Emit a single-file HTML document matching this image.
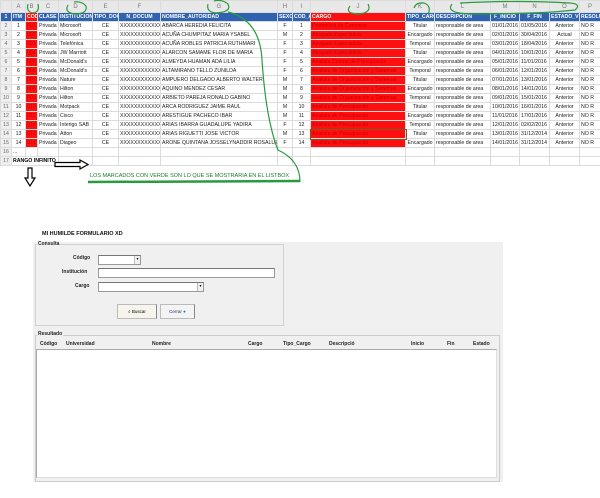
<!DOCTYPE html>
<html><head><meta charset="utf-8"><style>
body{margin:0;width:600px;height:498px;background:#fff;position:relative;overflow:hidden;font-family:"Liberation Sans",sans-serif}
table{position:absolute;left:0;top:0;width:600px;border-collapse:collapse;table-layout:fixed;font-size:5.2px;color:#222}
td{height:8px;padding:0 1px;border:1px solid #dcdcdc;white-space:nowrap;overflow:hidden;line-height:8px}
tr.h td{height:11px;background:#e8e8e8;color:#777;text-align:center;font-size:6px}
tr.b td{background:#2f62b0;color:#fff;font-weight:bold}
td.n{background:#efefef;color:#666;text-align:center}
td.r{background:#ff1010;color:#c00}
.c{text-align:center}
.ab{position:absolute}
.lbl{font-size:5px;font-weight:bold;color:#222}
.inp{position:absolute;background:#fff;border:1px solid #999;border-top-color:#777}
.dd{position:absolute;right:0;top:0;width:5px;height:100%;border-left:1px solid #bbb;background:#f0f0f0;font-size:4px;text-align:center}
</style></head><body>
<table>
<colgroup><col style="width:11px"><col style="width:14px"><col style="width:12px"><col style="width:21px"><col style="width:34px"><col style="width:26px"><col style="width:42px"><col style="width:117px"><col style="width:15px"><col style="width:18px"><col style="width:95px"><col style="width:29px"><col style="width:56px"><col style="width:29px"><col style="width:30px"><col style="width:30px"><col style="width:21px"></colgroup>
<tr class="h"><td></td><td>A</td><td>B</td><td>C</td><td>D</td><td>E</td><td>F</td><td>G</td><td>H</td><td>I</td><td>J</td><td>K</td><td>L</td><td>M</td><td>N</td><td>O</td><td>P</td></tr>
<tr class="b"><td class="n">1</td><td>ITM</td><td style="background:#ff1010">COD</td><td>CLASE</td><td>INSTITUCION</td><td>TIPO_DOC</td><td class="c">N_DOCUM</td><td>NOMBRE_AUTORIDAD</td><td>SEXO</td><td>COD_AUT</td><td style="background:#ff1010">CARGO</td><td>TIPO_CARGO</td><td>DESCRIPCION</td><td class="c">F_INICIO</td><td class="c">F_FIN</td><td>ESTADO_VIG</td><td>RESOLUC</td></tr>
<tr><td class="n">2</td><td class="c">1</td><td class="r">001</td><td>Privada</td><td>Microsoft</td><td class="c">CE</td><td>XXXXXXXXXXXXX</td><td>ABARCA HEREDIA FELICITA</td><td class="c">F</td><td class="c">1</td><td class="r">Promotora de Comercio</td><td class="c">Titular</td><td>responsable de area</td><td>01/01/2016</td><td>01/05/2016</td><td class="c">Anterior</td><td>NO R</td></tr>
<tr><td class="n">3</td><td class="c">2</td><td class="r">002</td><td>Privada</td><td>Microsoft</td><td class="c">CE</td><td>XXXXXXXXXXXXX</td><td>ACUÑA CHUMPITAZ MARIA YSABEL</td><td class="c">M</td><td class="c">2</td><td class="r">Abogado Especialista</td><td class="c">Encargado</td><td>responsable de area</td><td>02/01/2016</td><td>30/04/2016</td><td class="c">Actual</td><td>NO R</td></tr>
<tr><td class="n">4</td><td class="c">3</td><td class="r">003</td><td>Privada</td><td>Telefónica</td><td class="c">CE</td><td>XXXXXXXXXXXXX</td><td>ACUÑA ROBLES PATRICIA RUTHMARI</td><td class="c">F</td><td class="c">3</td><td class="r">Abogado Especialista</td><td class="c">Temporal</td><td>responsable de area</td><td>03/01/2016</td><td>18/04/2016</td><td class="c">Anterior</td><td>NO R</td></tr>
<tr><td class="n">5</td><td class="c">4</td><td class="r">004</td><td>Privada</td><td>JW Marriott</td><td class="c">CE</td><td>XXXXXXXXXXXXX</td><td>ALARCON SAMAME FLOR DE MARIA</td><td class="c">F</td><td class="c">4</td><td class="r">Abogado Especialista</td><td class="c">Titular</td><td>responsable de area</td><td>04/01/2016</td><td>10/01/2016</td><td class="c">Anterior</td><td>NO R</td></tr>
<tr><td class="n">6</td><td class="c">5</td><td class="r">005</td><td>Privada</td><td>McDonald's</td><td class="c">CE</td><td>XXXXXXXXXXXXX</td><td>ALMEYDA HUAMAN ADA LILIA</td><td class="c">F</td><td class="c">5</td><td class="r">Analista Central de Presupuesto</td><td class="c">Encargado</td><td>responsable de area</td><td>05/01/2016</td><td>11/01/2016</td><td class="c">Anterior</td><td>NO R</td></tr>
<tr><td class="n">7</td><td class="c">6</td><td class="r">006</td><td>Privada</td><td>McDonald's</td><td class="c">CE</td><td>XXXXXXXXXXXXX</td><td>ALTAMIRANO TELLO ZUNILDA</td><td class="c">F</td><td class="c">6</td><td class="r">Analista de Organización y Sistemas</td><td class="c">Temporal</td><td>responsable de area</td><td>06/01/2016</td><td>12/01/2016</td><td class="c">Anterior</td><td>NO R</td></tr>
<tr><td class="n">8</td><td class="c">7</td><td class="r">007</td><td>Privada</td><td>Nature</td><td class="c">CE</td><td>XXXXXXXXXXXXX</td><td>AMPUERO DELGADO ALBERTO WALTER</td><td class="c">M</td><td class="c">7</td><td class="r">Analista de Organización y Sistemas</td><td class="c">Titular</td><td>responsable de area</td><td>07/01/2016</td><td>13/01/2016</td><td class="c">Anterior</td><td>NO R</td></tr>
<tr><td class="n">9</td><td class="c">8</td><td class="r">008</td><td>Privada</td><td>Hilton</td><td class="c">CE</td><td>XXXXXXXXXXXXX</td><td>AQUINO MENDEZ CESAR</td><td class="c">M</td><td class="c">8</td><td class="r">Analista de Organización y Sistemas</td><td class="c">Encargado</td><td>responsable de area</td><td>08/01/2016</td><td>14/01/2016</td><td class="c">Anterior</td><td>NO R</td></tr>
<tr><td class="n">10</td><td class="c">9</td><td class="r">009</td><td>Privada</td><td>Hilton</td><td class="c">CE</td><td>XXXXXXXXXXXXX</td><td>ARBIETO PAREJA RONALD GABINO</td><td class="c">M</td><td class="c">9</td><td class="r">Analista de Organización y Sistemas</td><td class="c">Temporal</td><td>responsable de area</td><td>09/01/2016</td><td>15/01/2016</td><td class="c">Anterior</td><td>NO R</td></tr>
<tr><td class="n">11</td><td class="c">10</td><td class="r">010</td><td>Privada</td><td>Motpack</td><td class="c">CE</td><td>XXXXXXXXXXXXX</td><td>ARCA RODRIGUEZ JAIME RAUL</td><td class="c">M</td><td class="c">10</td><td class="r">Analista de Presupuesto</td><td class="c">Titular</td><td>responsable de area</td><td>10/01/2016</td><td>16/01/2016</td><td class="c">Anterior</td><td>NO R</td></tr>
<tr><td class="n">12</td><td class="c">11</td><td class="r">011</td><td>Privada</td><td>Cisco</td><td class="c">CE</td><td>XXXXXXXXXXXXX</td><td>ARESTIGUE PACHECO IBAR</td><td class="c">M</td><td class="c">11</td><td class="r">Analista de Presupuesto</td><td class="c">Encargado</td><td>responsable de area</td><td>11/01/2016</td><td>17/01/2016</td><td class="c">Anterior</td><td>NO R</td></tr>
<tr><td class="n">13</td><td class="c">12</td><td class="r">012</td><td>Privada</td><td>Interigo SAB</td><td class="c">CE</td><td>XXXXXXXXXXXXX</td><td>ARIAS IBARRA GUADALUPE YADIRA</td><td class="c">F</td><td class="c">12</td><td class="r">Analista de Presupuesto</td><td class="c">Temporal</td><td>responsable de area</td><td>12/01/2016</td><td>02/02/2016</td><td class="c">Anterior</td><td>NO R</td></tr>
<tr><td class="n">14</td><td class="c">13</td><td class="r">013</td><td>Privada</td><td>Atton</td><td class="c">CE</td><td>XXXXXXXXXXXXX</td><td>ARIAS RIGUETTI JOSE VICTOR</td><td class="c">M</td><td class="c">13</td><td class="r" style="outline:1px solid #7a5a20">Analista de Presupuesto</td><td class="c">Titular</td><td>responsable de area</td><td>13/01/2016</td><td>31/12/2014</td><td class="c">Anterior</td><td>NO R</td></tr>
<tr><td class="n">15</td><td class="c">14</td><td class="r">014</td><td>Privada</td><td>Diageo</td><td class="c">CE</td><td>XXXXXXXXXXXXX</td><td>ARONE QUINTANA JOSSELYNADDIR ROSALUZ</td><td class="c">F</td><td class="c">14</td><td class="r">Analista de Presupuesto</td><td class="c">Encargado</td><td>responsable de area</td><td>14/01/2016</td><td>31/12/2014</td><td class="c">Anterior</td><td>NO R</td></tr>
<tr><td class="n">16</td><td>...</td><td></td><td></td><td></td><td></td><td></td><td></td><td></td><td></td><td></td><td></td><td></td><td></td><td></td><td></td><td></td></tr>
<tr><td class="n">17</td><td colspan="3" style="font-weight:bold;color:#000">RANGO INFINITO</td><td></td><td></td><td></td><td></td><td></td><td></td><td></td><td></td><td></td><td></td><td></td><td></td><td></td></tr>
</table>

<div class="ab" style="left:90px;top:173px;font-size:5.5px;color:#1a7a30">LOS MARCADOS CON VERDE SON LO QUE SE MOSTRARIA EN EL LISTBOX</div>
<svg class="ab" style="left:0;top:0" width="600" height="200" viewBox="0 0 600 200">
<g fill="none" stroke="#2a9a40" stroke-width="1.2">
<path d="M28 4 Q26 12 33 13 Q40 12 38 4"/>
<path d="M68 5 Q64 12 74 14 Q88 14 86 6 Q82 1 74 2"/>
<path d="M208 4 Q206 12 216 13 Q232 12 228 4 Q222 -1 214 1"/>
<path d="M228 12 Q260 20 262 60 Q266 120 278 150 Q300 160 300 182"/>
<path d="M350 6 Q344 14 360 14 Q372 12 368 4"/>
<path d="M414 8 Q416 2 424 3 Q432 6 428 14"/>
<path d="M452 4 Q445 13 470 14 Q540 14 575 10 Q582 4 570 3 Q520 0 460 3"/>
</g>
<path d="M88 182 L300 181" stroke="#2a9a40" stroke-width="2.5"/>
<g fill="#fff" stroke="#000" stroke-width="1.2">
<path d="M55 162.5 H80 V160 L88 164.5 L80 169 V166.5 H55 Z"/>
<path d="M28 168 V178 H25 L30 186 L35 178 H32 V168 Z"/>
</g>
</svg>

<div class="ab" style="left:42px;top:231px;font-size:5.5px;font-weight:bold;color:#111">MI HUMILDE FORMULARIO XD</div>
<div class="ab" style="left:33px;top:242px;width:470px;height:240px;background:#f0f0f0"></div>
<div class="ab" style="left:35px;top:244px;width:247px;height:80px;border:1px solid #d0d0d0"></div>
<div class="ab lbl" style="left:37px;top:241px;background:#f0f0f0;padding:0 1px">Consulta</div>
<div class="ab lbl" style="left:73px;top:255px">Código</div>
<div class="inp" style="left:98px;top:255px;width:41px;height:8px"><div class="dd">▾</div></div>
<div class="ab lbl" style="left:62px;top:269px">Institución</div>
<div class="inp" style="left:98px;top:268px;width:175px;height:8px"></div>
<div class="ab lbl" style="left:75px;top:283px">Cargo</div>
<div class="inp" style="left:98px;top:282px;width:104px;height:8px"><div class="dd">▾</div></div>
<div class="ab" style="left:117px;top:304px;width:38px;height:13px;background:#f6f4ec;border:1px solid #bbb;border-right-color:#888;font-size:4.5px;line-height:13px;text-align:center">⌕ Buscar</div>
<div class="ab" style="left:160px;top:304px;width:33px;height:13px;background:#f4f4f4;border:1px solid #bbb;border-right-color:#888;font-size:4.5px;line-height:13px;text-align:center;color:#235">Cerrar <span style="color:#2a6ad0">●</span></div>
<div class="ab" style="left:35px;top:335px;width:463px;height:145px;border:1px solid #ccc"></div>
<div class="ab lbl" style="left:37px;top:331px;background:#f0f0f0;padding:0 1px">Resultado</div>
<div class="ab lbl" style="left:40px;top:341px">Código</div>
<div class="ab lbl" style="left:66px;top:341px">Universidad</div>
<div class="ab lbl" style="left:152px;top:341px">Nombre</div>
<div class="ab lbl" style="left:248px;top:341px">Cargo</div>
<div class="ab lbl" style="left:283px;top:341px">Tipo_Cargo</div>
<div class="ab lbl" style="left:329px;top:341px">Descripció</div>
<div class="ab lbl" style="left:411px;top:341px">Inicio</div>
<div class="ab lbl" style="left:447px;top:341px">Fin</div>
<div class="ab lbl" style="left:473px;top:341px">Estado</div>
<div class="ab" style="left:36px;top:349px;width:459px;height:127px;background:#fff;border:1px solid #aaa;border-right-color:#ddd;border-bottom-color:#ddd"></div>
</body></html>
